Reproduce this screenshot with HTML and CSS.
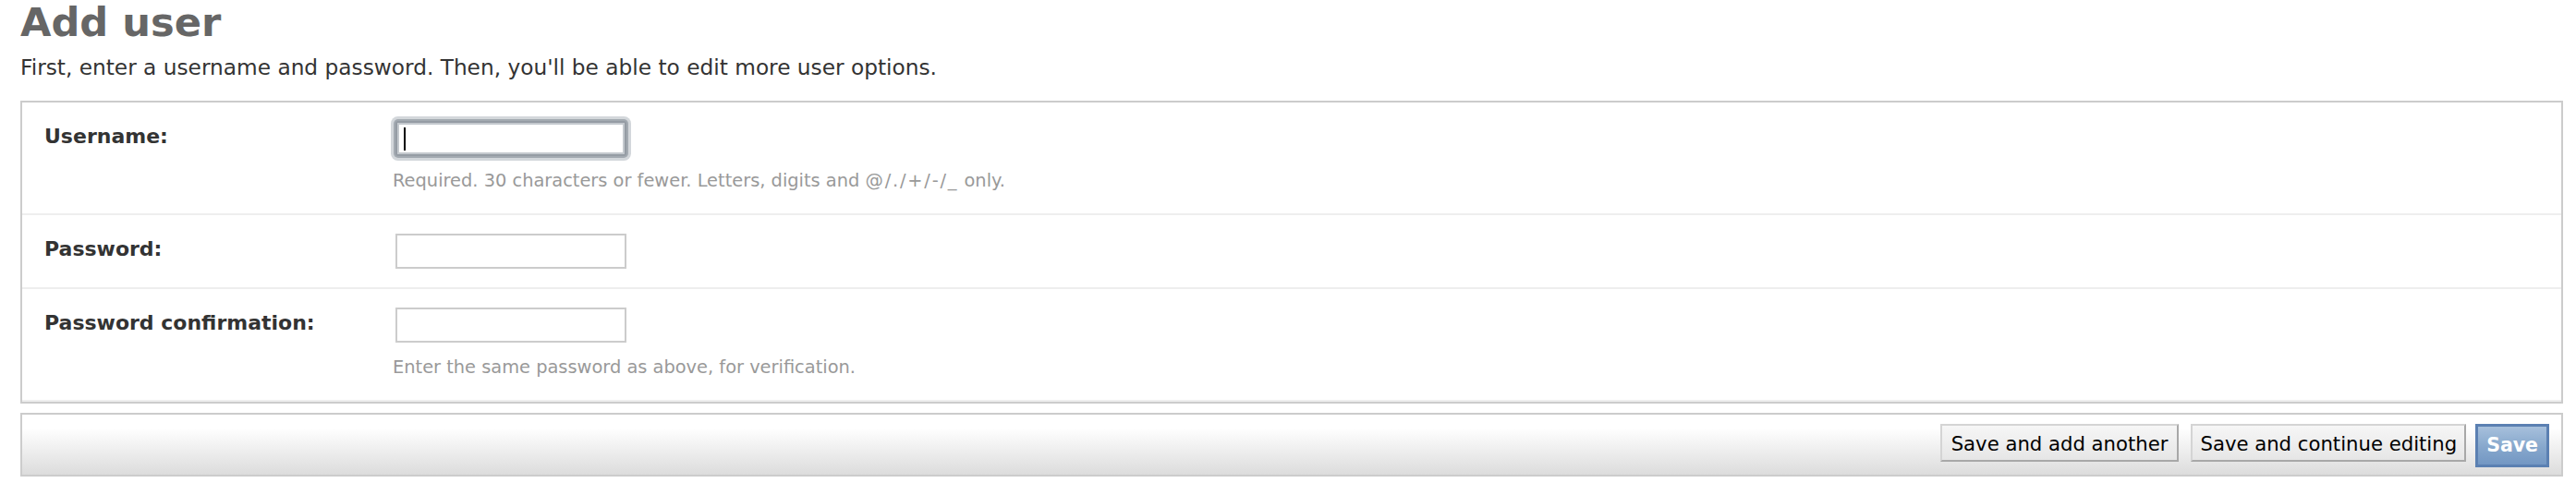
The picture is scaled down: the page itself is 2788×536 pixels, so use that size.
FILE: index.html
```html
<!DOCTYPE html>
<html lang="en">
<head>
<meta charset="utf-8">
<title>Add user</title>
<link rel="stylesheet" href="styles.css">
</head>
<body>
<div class="content">
  <h1 class="title">Add user</h1>
  <p class="intro">First, enter a username and password. Then, you'll be able to edit more user options.</p>
  <div class="module">
    <div class="form-row">
      <label class="label" for="id_username">Username:</label>
      <div class="input-wrap">
        <input class="text-input focused" type="text" id="id_username">
        <span class="caret"></span>
      </div>
      <p class="help">Required. 30 characters or fewer. Letters, digits and <span class="symbols">@/./+/-/_</span> only.</p>
    </div>
    <div class="form-row">
      <label class="label" for="id_password1">Password:</label>
      <div class="input-wrap">
        <input class="text-input" type="password" id="id_password1">
      </div>
    </div>
    <div class="form-row">
      <label class="label" for="id_password2">Password confirmation:</label>
      <div class="input-wrap">
        <input class="text-input" type="password" id="id_password2">
      </div>
      <p class="help">Enter the same password as above, for verification.</p>
    </div>
  </div>
  <div class="submit-row">
    <input class="btn btn-another" type="submit" value="Save and add another">
    <input class="btn btn-continue" type="submit" value="Save and continue editing">
    <input class="btn btn-default" type="submit" value="Save">
  </div>
</div>
</body>
</html>
```
FILE: styles.css
```css
html, body {
  margin: 0;
  padding: 0;
  background: #fff;
}
body {
  font-family: "DejaVu Sans", "Liberation Sans", sans-serif;
  color: #333;
}
.content {
  padding: 0 14px 0 22px;
}
.title {
  margin: 0;
  padding: 0;
  font-size: 43.2px;
  line-height: 48px;
  font-weight: bold;
  color: #666;
}
.intro {
  margin: 11px 0 22px;
  font-size: 23.25px;
  line-height: 28px;
  color: #333;
}
.module {
  border: 2px solid #ccc;
  background: #fff;
}
.form-row {
  display: grid;
  grid-template-columns: 380px 1fr;
  padding: 20px 24px 20px;
  border-bottom: 2px solid #eee;
}
.label {
  grid-column: 1;
  margin-top: 4px;
  font-size: 22px;
  line-height: 26px;
  font-weight: bold;
  color: #333;
}
.input-wrap {
  grid-column: 2;
  position: relative;
  width: 250px;
  height: 38px;
}
.text-input {
  box-sizing: border-box;
  display: block;
  width: 250px;
  height: 38px;
  margin: 0;
  padding: 4px 8px;
  border: 2px solid #ccc;
  background: #fff;
  font-family: "DejaVu Sans", sans-serif;
  font-size: 20px;
  outline: none;
}
.text-input.focused {
  border-color: #959ca4;
  border-radius: 3px;
  box-shadow: inset 0 0 0 2px #c4c9ce, 0 0 0 2px #a3aab1, 0 0 0 5px #d3d7db;
}
.caret {
  position: absolute;
  left: 9px;
  top: 7px;
  width: 2px;
  height: 25px;
  background: #000;
}
.help {
  grid-column: 2;
  margin: 15px 0 3px -3px;
  font-size: 19.4px;
  line-height: 24px;
  color: #999;
}
.symbols {
  letter-spacing: 1.8px;
}
.submit-row {
  margin-top: 10px;
  border: 2px solid #ccc;
  padding: 10px 13px 8px;
  display: flex;
  justify-content: flex-end;
  align-items: flex-start;
  background: linear-gradient(to bottom, #fff 0%, #fff 22%, #dcdcdc 100%);
}
.btn {
  box-sizing: border-box;
  margin: 0;
  height: 41px;
  padding: 3px 10px 0;
  line-height: 34px;
  font-family: "DejaVu Sans", sans-serif;
  font-size: 21.2px;
  color: #000;
  border: 2px solid;
  border-color: #d4d4d4 #a8a8a8 #a8a8a8 #d4d4d4;
  background: linear-gradient(to bottom, #f6f6f6 0%, #e6e6e6 100%);
  border-radius: 0;
}
.btn-another {
  margin-right: 13px;
}
.btn-continue {
  margin-right: 10px;
  padding: 3px 8px 0;
}
.btn-default {
  height: 47px;
  padding: 0 9px;
  line-height: 41px;
  font-size: 20.5px;
  border: 3px solid #5b80b2;
  background: linear-gradient(to bottom, #a7c0dc 0%, #86a7cc 55%, #7397c3 100%);
  color: #fff;
  font-weight: bold;
}
```
